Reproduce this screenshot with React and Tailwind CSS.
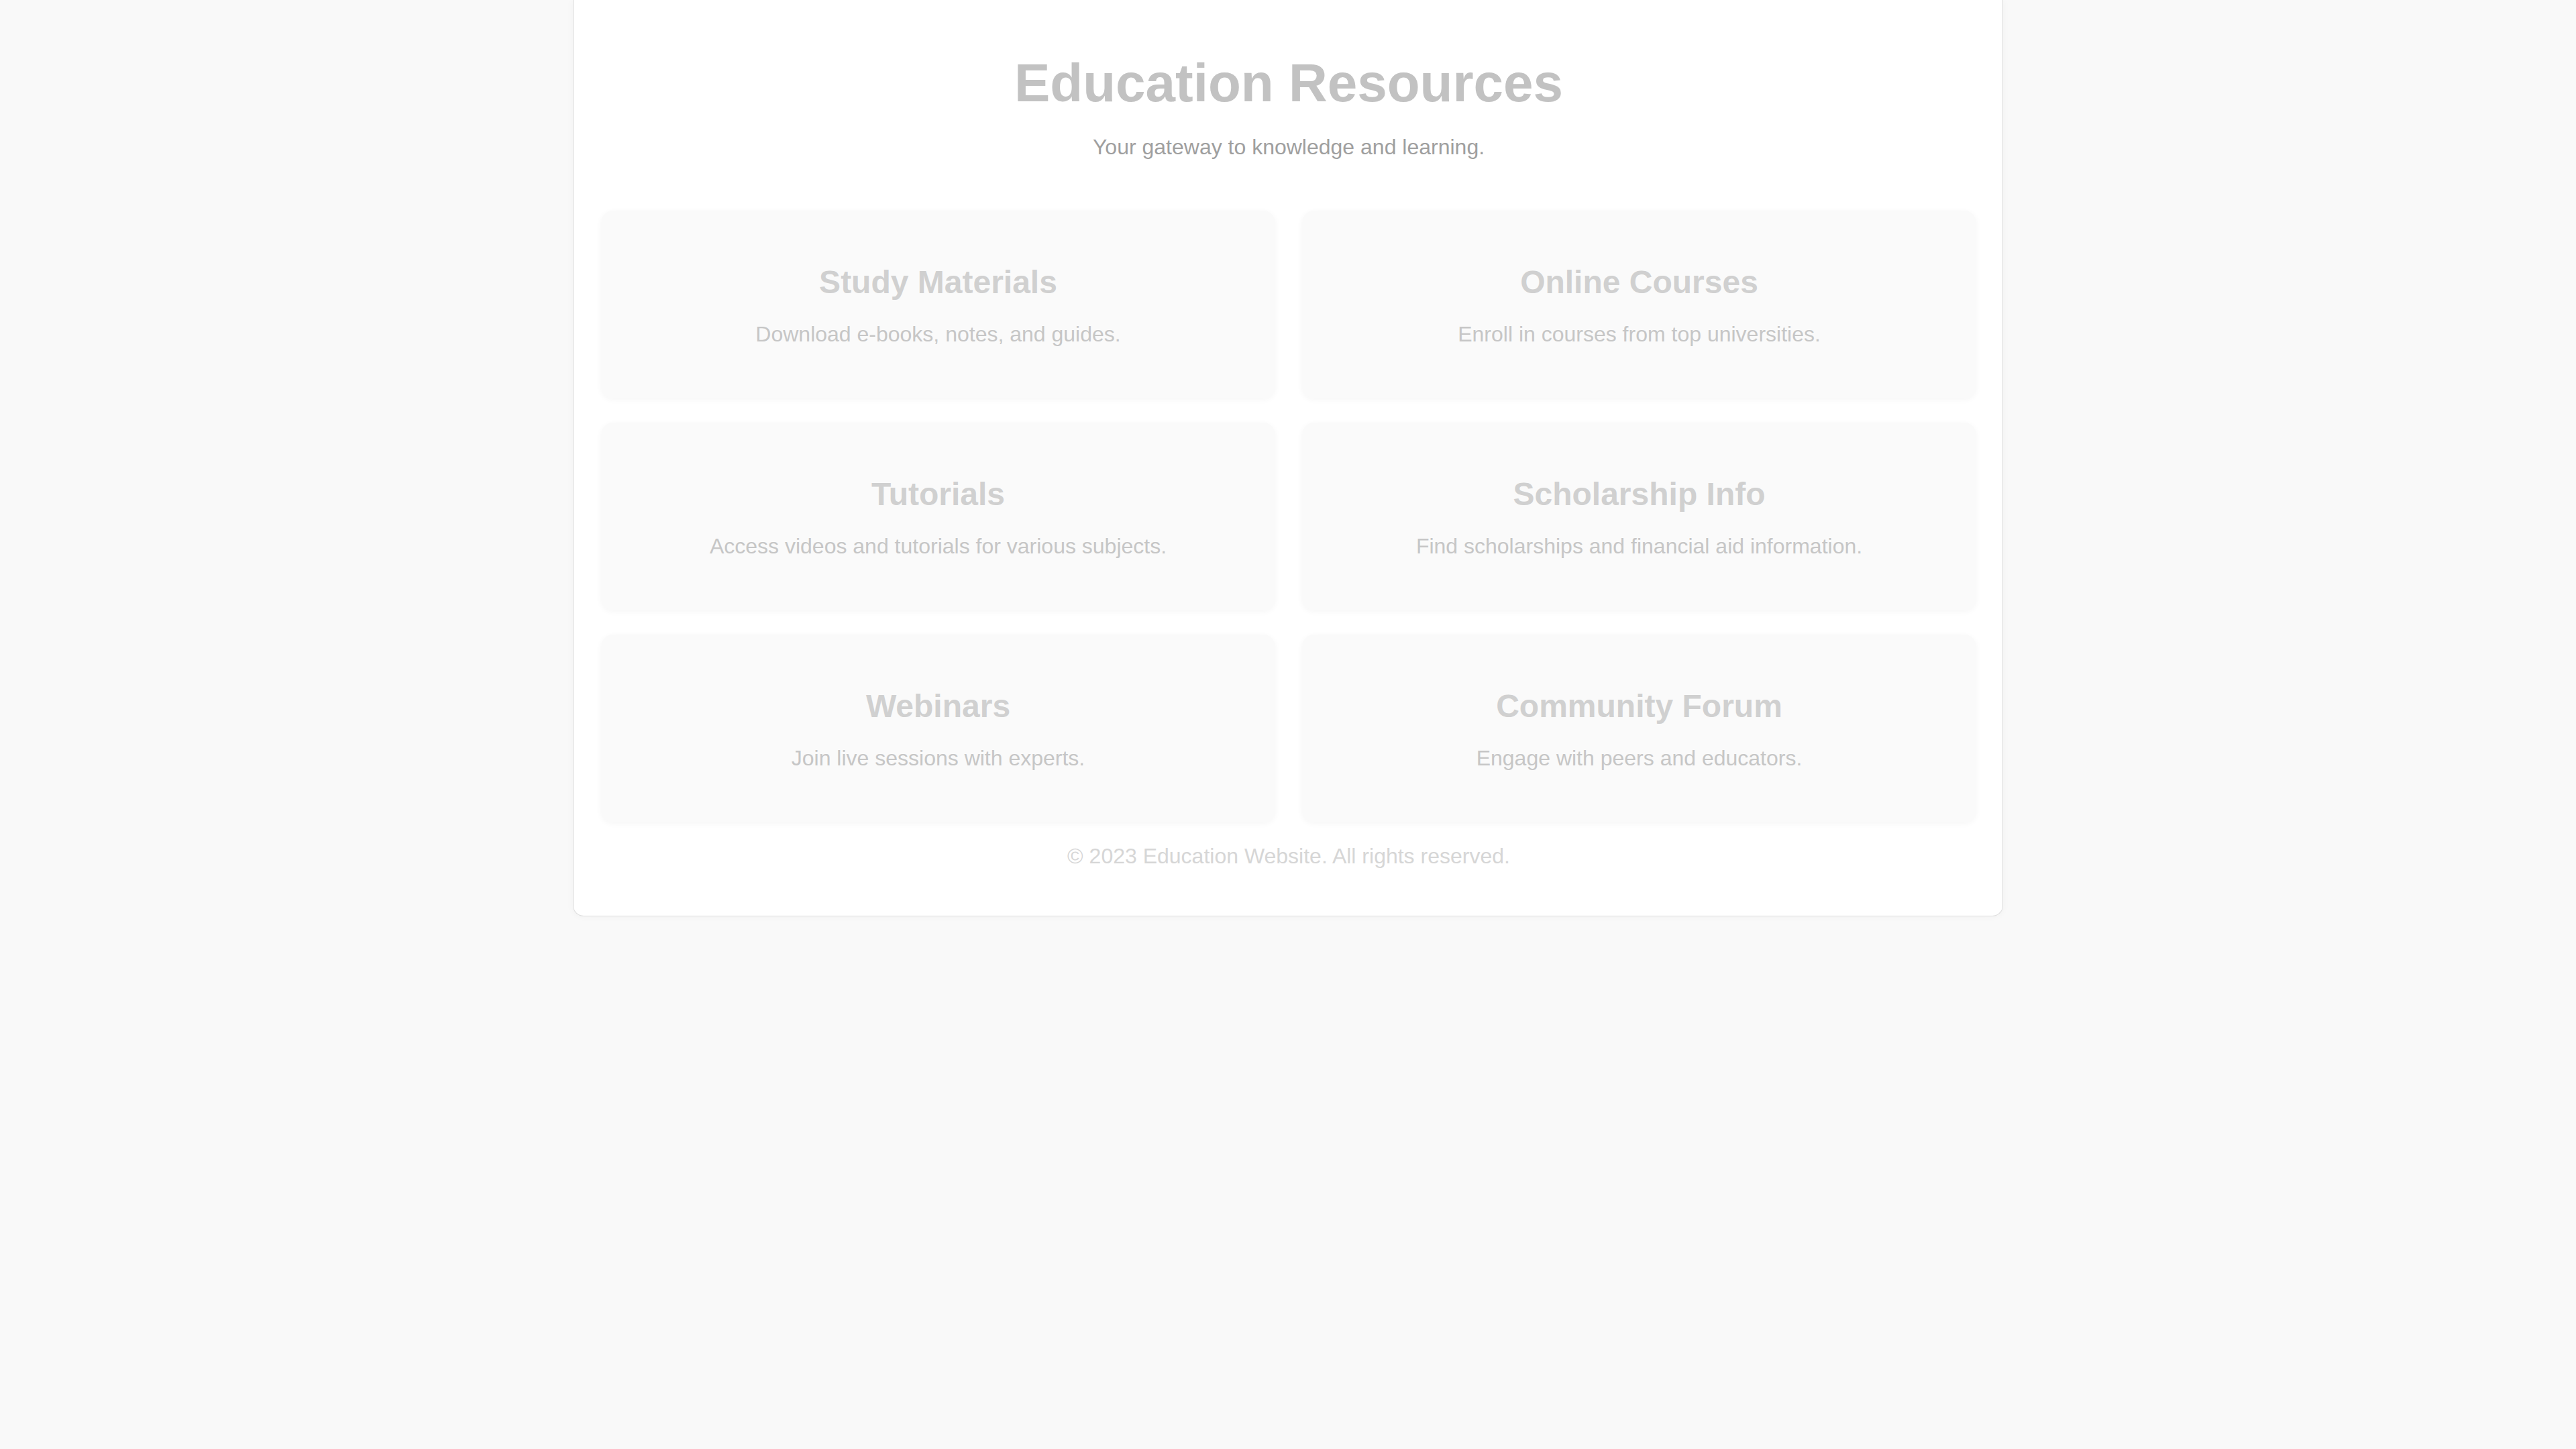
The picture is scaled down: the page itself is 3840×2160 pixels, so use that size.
import React from "react";

const resources = [
  { title: "Study Materials", text: "Download e-books, notes, and guides." },
  { title: "Online Courses", text: "Enroll in courses from top universities." },
  { title: "Tutorials", text: "Access videos and tutorials for various subjects." },
  { title: "Scholarship Info", text: "Find scholarships and financial aid information." },
  { title: "Webinars", text: "Join live sessions with experts." },
  { title: "Community Forum", text: "Engage with peers and educators." },
];

const ResourceCard = ({ title, text }) => {
  return (
    <div className="h-[280px] rounded-[18px] bg-[#fafafa] pt-[79px] text-center shadow-[0_2px_10px_rgba(0,0,0,0.04)]">
      <h3 className="text-[48px] leading-[55px] font-bold text-[#d0d0d0]">{title}</h3>
      <p className="mt-[32px] text-[32px] leading-[37px] text-[#c6c6c6]">{text}</p>
    </div>
  );
};

const App = () => {
  return (
    <div className="min-h-screen w-full bg-[#f9f9f9] font-['Liberation_Sans',Arial,sans-serif]">
      <div className="mx-auto w-[2132px] rounded-b-[16px] border border-t-0 border-[#dedede] bg-white pl-[41px] pr-[39px] pt-[78px] pb-[70px] shadow-[0_0_12px_rgba(0,0,0,0.04)]">
        <h1 className="text-center text-[80px] leading-[92px] font-bold text-[#c2c2c2]">Education Resources</h1>
        <p className="mt-[31px] text-center text-[32px] leading-[37px] text-[#9f9f9f]">
          Your gateway to knowledge and learning.
        </p>
        <div className="mt-[76px] grid grid-cols-2 gap-x-10 gap-y-9">
          {resources.map((r) => (
            <ResourceCard key={r.title} title={r.title} text={r.text} />
          ))}
        </div>
        <footer className="mt-[32px] text-center text-[32px] leading-[37px] text-[#d6d6d6]">
          © 2023 Education Website. All rights reserved.
        </footer>
      </div>
    </div>
  );
};

export default App;
